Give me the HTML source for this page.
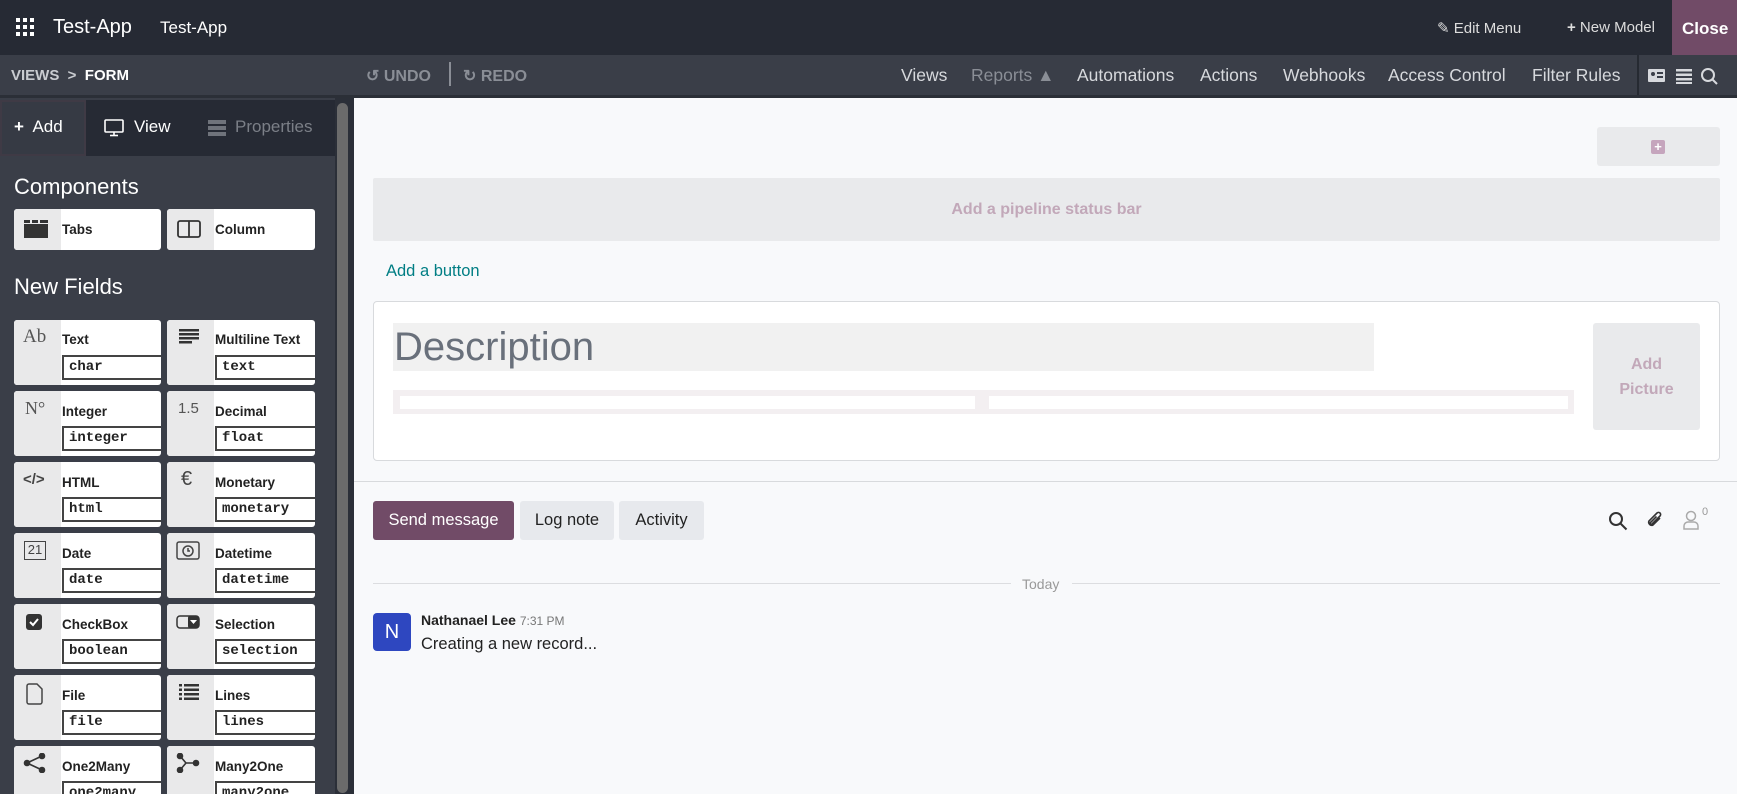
<!DOCTYPE html>
<html><head><meta charset="utf-8"><style>
*{box-sizing:border-box;margin:0;padding:0}
body{width:1737px;height:794px;overflow:hidden;font-family:"Liberation Sans",sans-serif;background:#f8f9fb;position:relative}
.a{position:absolute}
.top{left:0;top:0;width:1737px;height:55px;background:#262a34;color:#fff}
.bar2{left:0;top:55px;width:1737px;height:43px;background:#3a3e48;border-bottom:3px solid #2b2f37;color:#d7d9dd;font-size:17.5px}
.side{left:0;top:98px;width:354px;height:696px;background:#3a3e48}
.card{position:absolute;background:#fff;border-radius:3px;overflow:hidden}
.card .ic{position:absolute;left:0;top:0;bottom:0;width:47px;background:#e9e9ea}
.card .lb{position:absolute;left:48px;font-size:13.5px;font-weight:bold;color:#222}
.card .in{position:absolute;left:48px;top:35px;width:100px;height:25px;border:2px solid #444;font-family:"Liberation Mono",monospace;font-size:14px;font-weight:bold;color:#222;padding:2px 0 0 5px;border-right:none}
.nav span{position:absolute;top:10px}
</style></head><body>
<div class="a top">
 <svg class="a" style="left:16px;top:18px" width="18" height="18" viewBox="0 0 18 18" fill="#fff"><rect x="0" y="0" width="4" height="4"/><rect x="7" y="0" width="4" height="4"/><rect x="14" y="0" width="4" height="4"/><rect x="0" y="7" width="4" height="4"/><rect x="7" y="7" width="4" height="4"/><rect x="14" y="7" width="4" height="4"/><rect x="0" y="14" width="4" height="4"/><rect x="7" y="14" width="4" height="4"/><rect x="14" y="14" width="4" height="4"/></svg>
 <span class="a" style="left:53px;top:16px;font-size:20px">Test-App</span>
 <span class="a" style="left:160px;top:18px;font-size:17px">Test-App</span>
 <span class="a" style="left:1437px;top:19px;font-size:15px;color:#ddd">✎ Edit Menu</span>
 <span class="a" style="left:1567px;top:19px;font-size:15px;color:#ddd"><b>+</b> New Model</span>
 <div class="a" style="left:1672px;top:0;width:65px;height:55px;background:#714b67;font-size:17px;font-weight:bold;padding:19px 0 0 10px">Close</div>
</div>
<div class="a bar2 nav">
 <span style="left:11px;top:12px;font-size:15px;font-weight:bold;color:#c9ccd1">VIEWS &nbsp;&gt;&nbsp; <span style="position:static;color:#fff">FORM</span></span>
 <span style="left:366px;top:11px;font-size:16px;font-weight:bold;color:#8a8e96">↺ UNDO</span>
 <div class="a" style="left:449px;top:7px;width:2px;height:24px;background:#8a8e96"></div>
 <span style="left:463px;top:11px;font-size:16px;font-weight:bold;color:#8a8e96">↻ REDO</span>
 <span style="left:901px">Views</span>
 <span style="left:971px;color:#8a8e96">Reports ▲</span>
 <span style="left:1077px">Automations</span>
 <span style="left:1200px">Actions</span>
 <span style="left:1283px">Webhooks</span>
 <span style="left:1388px">Access Control</span>
 <span style="left:1532px">Filter Rules</span>
 <div class="a" style="left:1637px;top:0;width:2px;height:40px;background:#262a32"></div>
 <svg class="a" style="left:1648px;top:12px" width="80" height="18" viewBox="0 0 80 18" fill="#d7d9dd"><rect x="0" y="2" width="17" height="13" rx="1"/><rect x="9" y="5" width="6" height="2" fill="#3a3e48"/><rect x="9" y="9" width="6" height="2" fill="#3a3e48"/><circle cx="5" cy="7" r="2" fill="#3a3e48"/><rect x="28" y="2" width="16" height="2.5"/><rect x="28" y="6.5" width="16" height="2.5"/><rect x="28" y="11" width="16" height="2.5"/><rect x="28" y="15" width="16" height="2"/><circle cx="60" cy="8" r="6" fill="none" stroke="#d7d9dd" stroke-width="2"/><line x1="64" y1="12" x2="69" y2="17" stroke="#d7d9dd" stroke-width="2"/></svg>
</div>
<div class="a side">
 <div class="a" style="left:0;top:2px;width:337px;height:56px;background:#262a34"></div>
 <div class="a" style="left:0;top:2px;width:86px;height:56px;background:#363a44;border:2px solid #3f3a45"></div>
 <span class="a" style="left:14px;top:19px;font-size:17px;color:#fff"><b>+</b>&nbsp; Add</span>
 <svg class="a" style="left:104px;top:21px" width="20" height="18" viewBox="0 0 20 18" fill="none" stroke="#fff" stroke-width="1.6"><rect x="1" y="1" width="18" height="12" rx="1"/><line x1="10" y1="13" x2="10" y2="16"/><line x1="6" y1="16.5" x2="14" y2="16.5"/></svg>
 <span class="a" style="left:134px;top:19px;font-size:17px;color:#fff">View</span>
 <svg class="a" style="left:208px;top:22px" width="18" height="16" viewBox="0 0 18 16" fill="#6f737b"><rect x="0" y="0" width="18" height="4"/><rect x="0" y="6" width="18" height="4"/><rect x="0" y="12" width="18" height="4"/></svg>
 <span class="a" style="left:235px;top:19px;font-size:17px;color:#7b7f87">Properties</span>
 <div class="a" style="left:335px;top:0;width:19px;height:696px;background:#2b2f38"></div>
 <div class="a" style="left:337px;top:5px;width:11px;height:690px;background:#6b6b6b;border-radius:6px"></div>
 <span class="a" style="left:14px;top:76px;font-size:22px;color:#fff">Components</span>
 <div class="card" style="left:14px;top:111px;width:147px;height:41px"><div class="ic"></div><span class="lb" style="top:13px">Tabs</span>
  <svg class="a" style="left:10px;top:11px" width="24" height="18" viewBox="0 0 24 18" fill="#333"><rect x="0" y="4" width="24" height="14"/><rect x="0" y="0" width="6" height="3"/><rect x="8" y="0" width="6" height="3"/><rect x="16" y="0" width="8" height="3"/></svg></div>
 <div class="card" style="left:167px;top:111px;width:148px;height:41px"><div class="ic"></div><span class="lb" style="top:13px">Column</span>
  <svg class="a" style="left:10px;top:11px" width="24" height="18" viewBox="0 0 24 18" fill="none" stroke="#333" stroke-width="1.8"><rect x="1" y="1" width="22" height="16" rx="2"/><line x1="12" y1="1" x2="12" y2="17"/></svg></div>
 <span class="a" style="left:14px;top:176px;font-size:22px;color:#fff">New Fields</span>
</div>
<div class="a" style="left:0;top:320px;width:335px;height:474px;overflow:hidden">
 <div class="card" style="left:14px;top:0;width:147px;height:65px"><div class="ic"></div><span class="a" style="left:9px;top:6px;font-family:'Liberation Serif',serif;font-size:19px;color:#555">Ab</span><span class="lb" style="top:12px">Text</span><div class="in">char</div></div>
 <div class="card" style="left:167px;top:0;width:148px;height:65px"><div class="ic"></div><svg class="a" style="left:12px;top:9px" width="20" height="15" fill="#333"><rect y="0" width="20" height="2.5"/><rect y="4" width="20" height="2.5"/><rect y="8" width="20" height="2.5"/><rect y="12" width="13" height="2.5"/></svg><span class="lb" style="top:12px">Multiline Text</span><div class="in">text</div></div>
 <div class="card" style="left:14px;top:71px;width:147px;height:65px"><div class="ic"></div><span class="a" style="left:11px;top:7px;font-family:'Liberation Serif',serif;font-size:18px;color:#555">N°</span><span class="lb" style="top:13px">Integer</span><div class="in">integer</div></div>
 <div class="card" style="left:167px;top:71px;width:148px;height:65px"><div class="ic"></div><span class="a" style="left:11px;top:9px;font-size:15px;color:#555">1.5</span><span class="lb" style="top:13px">Decimal</span><div class="in">float</div></div>
 <div class="card" style="left:14px;top:142px;width:147px;height:65px"><div class="ic"></div><span class="a" style="left:9px;top:9px;font-size:15px;font-weight:bold;color:#444">&lt;/&gt;</span><span class="lb" style="top:13px">HTML</span><div class="in">html</div></div>
 <div class="card" style="left:167px;top:142px;width:148px;height:65px"><div class="ic"></div><span class="a" style="left:14px;top:6px;font-size:20px;color:#444">€</span><span class="lb" style="top:13px">Monetary</span><div class="in">monetary</div></div>
 <div class="card" style="left:14px;top:213px;width:147px;height:65px"><div class="ic"></div><span class="a" style="left:10px;top:8px;width:22px;height:19px;border:1.5px solid #444;font-size:13px;color:#444;text-align:center;line-height:16px">21</span><span class="lb" style="top:13px">Date</span><div class="in">date</div></div>
 <div class="card" style="left:167px;top:213px;width:148px;height:65px"><div class="ic"></div><svg class="a" style="left:9px;top:7px" width="24" height="20" fill="none" stroke="#444" stroke-width="1.5"><rect x="1" y="2" width="22" height="17" rx="2"/><circle cx="12" cy="11" r="5"/><path d="M12 8v3h2"/></svg><span class="lb" style="top:13px">Datetime</span><div class="in">datetime</div></div>
 <div class="card" style="left:14px;top:284px;width:147px;height:65px"><div class="ic"></div><svg class="a" style="left:12px;top:10px" width="16" height="16"><rect width="16" height="16" rx="3" fill="#333"/><path d="M4 8l3 3 5-6" stroke="#fff" stroke-width="2" fill="none"/></svg><span class="lb" style="top:13px">CheckBox</span><div class="in">boolean</div></div>
 <div class="card" style="left:167px;top:284px;width:148px;height:65px"><div class="ic"></div><svg class="a" style="left:9px;top:11px" width="24" height="14"><rect x="1" y="1" width="22" height="12" rx="3" fill="none" stroke="#333" stroke-width="1.5"/><rect x="12" y="1" width="11" height="12" rx="2" fill="#333"/><path d="M14 5h7l-3.5 4z" fill="#fff"/></svg><span class="lb" style="top:13px">Selection</span><div class="in">selection</div></div>
 <div class="card" style="left:14px;top:355px;width:147px;height:65px"><div class="ic"></div><svg class="a" style="left:12px;top:8px" width="18" height="22" fill="none" stroke="#444" stroke-width="1.5"><path d="M1 3a2 2 0 0 1 2-2h8l5 5v13a2 2 0 0 1-2 2H3a2 2 0 0 1-2-2z"/></svg><span class="lb" style="top:13px">File</span><div class="in">file</div></div>
 <div class="card" style="left:167px;top:355px;width:148px;height:65px"><div class="ic"></div><svg class="a" style="left:12px;top:9px" width="20" height="16" fill="#333"><rect x="0" y="0" width="3" height="2.5"/><rect x="5" y="0" width="15" height="2.5"/><rect x="0" y="4.5" width="3" height="2.5"/><rect x="5" y="4.5" width="15" height="2.5"/><rect x="0" y="9" width="3" height="2.5"/><rect x="5" y="9" width="15" height="2.5"/><rect x="0" y="13.5" width="3" height="2.5"/><rect x="5" y="13.5" width="15" height="2.5"/></svg><span class="lb" style="top:13px">Lines</span><div class="in">lines</div></div>
 <div class="card" style="left:14px;top:426px;width:147px;height:65px"><div class="ic"></div><svg class="a" style="left:9px;top:7px" width="24" height="20" fill="#333" stroke="#333" stroke-width="1.6"><circle cx="4" cy="10" r="2.5"/><circle cx="19" cy="3" r="2.5"/><circle cx="19" cy="17" r="2.5"/><path d="M4 10l15-7M4 10l15 7" fill="none"/></svg><span class="lb" style="top:13px">One2Many</span><div class="in">one2many</div></div>
 <div class="card" style="left:167px;top:426px;width:148px;height:65px"><div class="ic"></div><svg class="a" style="left:9px;top:7px" width="24" height="20" fill="#333" stroke="#333" stroke-width="1.6"><circle cx="4" cy="3" r="2.5"/><circle cx="4" cy="17" r="2.5"/><circle cx="20" cy="10" r="2.5"/><path d="M4 3l6 7h10M4 17l6-7" fill="none"/></svg><span class="lb" style="top:13px">Many2One</span><div class="in">many2one</div></div>
</div>

<div class="a" style="left:1597px;top:127px;width:123px;height:39px;background:#e9eaec;border-radius:3px"><div class="a" style="left:54px;top:13px;width:14px;height:14px;background:#c5a5bd;border-radius:2px;color:#fff;font-size:13px;line-height:14px;text-align:center;font-weight:bold">+</div></div>
<div class="a" style="left:373px;top:178px;width:1347px;height:63px;background:#e9eaec;border-radius:2px;text-align:center;line-height:63px;font-size:16px;font-weight:bold;color:#c2a8b9">Add a pipeline status bar</div>
<span class="a" style="left:386px;top:262px;font-size:16.5px;color:#017e84">Add a button</span>
<div class="a" style="left:373px;top:301px;width:1347px;height:160px;background:#fff;border:1px solid #d8dadd;border-radius:4px">
 <div class="a" style="left:19px;top:21px;width:981px;height:48px;background:#f1f1f1"></div>
 <span class="a" style="left:20px;top:23px;font-size:40px;color:#69707b">Description</span>
 <div class="a" style="left:19px;top:88px;width:1181px;height:24px;background:#f3eff1"></div>
 <div class="a" style="left:26px;top:94px;width:575px;height:13px;background:#fff"></div>
 <div class="a" style="left:615px;top:94px;width:579px;height:13px;background:#fff"></div>
 <div class="a" style="left:1219px;top:21px;width:107px;height:107px;background:#e9eaec;border-radius:3px;text-align:center;padding-top:29px;font-size:16px;font-weight:bold;color:#c2a8b9;line-height:25px">Add<br>Picture</div>
</div>
<div class="a" style="left:354px;top:481px;width:1383px;height:1px;background:#d8dadd"></div>
<div class="a" style="left:373px;top:501px;width:141px;height:39px;background:#714b67;border-radius:3px;color:#fff;font-size:16.5px;text-align:center;line-height:39px">Send message</div>
<div class="a" style="left:520px;top:501px;width:94px;height:39px;background:#e7e9ed;border-radius:3px;color:#222;font-size:16.5px;text-align:center;line-height:39px">Log note</div>
<div class="a" style="left:619px;top:501px;width:85px;height:39px;background:#e7e9ed;border-radius:3px;color:#222;font-size:16.5px;text-align:center;line-height:39px">Activity</div>
<svg class="a" style="left:1608px;top:511px" width="20" height="20" fill="none" stroke="#333" stroke-width="2"><circle cx="8" cy="8" r="6"/><path d="M12.5 12.5l6 6"/></svg>
<svg class="a" style="left:1645px;top:509px" width="20" height="22" fill="none" stroke="#333" stroke-width="1.6"><path d="M15 9l-7 7a3 3 0 0 1-4-4l8-8a2 2 0 0 1 3 3l-8 8a1 1 0 0 1-1.5-1.5l6-6"/></svg>
<svg class="a" style="left:1683px;top:510px" width="16" height="20" fill="none" stroke="#aaa" stroke-width="1.5"><circle cx="8" cy="6" r="4.5"/><path d="M1 19v-3a4 4 0 0 1 4-4h6a4 4 0 0 1 4 4v3z"/></svg>
<span class="a" style="left:1702px;top:506px;font-size:11px;color:#999">0</span>
<div class="a" style="left:373px;top:583px;width:638px;height:1px;background:#dcdde0"></div>
<span class="a" style="left:1022px;top:576px;font-size:14px;color:#999">Today</span>
<div class="a" style="left:1072px;top:583px;width:648px;height:1px;background:#dcdde0"></div>
<div class="a" style="left:373px;top:613px;width:38px;height:38px;background:#2e47c0;border-radius:4px;color:#fff;font-size:20px;text-align:center;line-height:38px">N</div>
<span class="a" style="left:421px;top:612px;font-size:14px;font-weight:bold;color:#222">Nathanael Lee <span style="font-weight:normal;font-size:12px;color:#777">7:31 PM</span></span>
<span class="a" style="left:421px;top:635px;font-size:16.5px;color:#222">Creating a new record...</span>
</body></html>
